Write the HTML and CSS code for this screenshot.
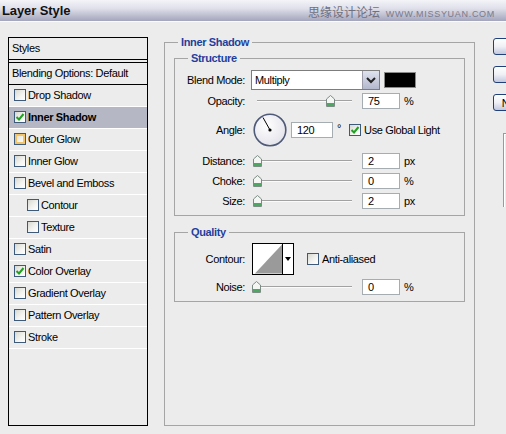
FILE: index.html
```html
<!DOCTYPE html>
<html lang="en">
<head>
    <meta charset="UTF-8">
    <title>Layer Style</title>
    <link rel="stylesheet" href="styles.css">
</head>
<body>
    <div class="titlebar">
        <span class="title">Layer Style</span>
        <span class="watermark">思缘设计论坛 <small>www.missyuan.com</small></span>
    </div>

    <div class="dialog">
        <div class="styles-list">
            <div class="styles-head">Styles</div>
            <div class="blend-opts">Blending Options: Default</div>
            <ul class="effects">
                <li><span class="cb"></span>Drop Shadow</li>
                <li class="selected"><span class="cb"><svg viewBox="0 0 10 10"><polyline points="1.5,5 4,7.5 8.5,2" /></svg></span>Inner Shadow</li>
                <li><span class="cb hover"></span>Outer Glow</li>
                <li><span class="cb"></span>Inner Glow</li>
                <li><span class="cb"></span>Bevel and Emboss</li>
                <li class="indent"><span class="cb"></span>Contour</li>
                <li class="indent"><span class="cb"></span>Texture</li>
                <li><span class="cb"></span>Satin</li>
                <li><span class="cb"><svg viewBox="0 0 10 10"><polyline points="1.5,5 4,7.5 8.5,2" /></svg></span>Color Overlay</li>
                <li><span class="cb"></span>Gradient Overlay</li>
                <li><span class="cb"></span>Pattern Overlay</li>
                <li><span class="cb"></span>Stroke</li>
            </ul>
        </div>

        <fieldset class="group main">
            <legend>Inner Shadow</legend>

            <fieldset class="group subgroup structure">
                <legend>Structure</legend>

                <div class="row blend-row">
                    <span class="lbl">Blend Mode:</span>
                    <div class="select">
                        <span class="select-text">Multiply</span>
                        <span class="select-btn"><svg viewBox="0 0 16 18"><polyline points="4,7 8,11 12,7" /></svg></span>
                    </div>
                    <span class="swatch"></span>
                </div>

                <div class="row slider-row opacity-row">
                    <span class="lbl">Opacity:</span>
                    <div class="slider">
                        <div class="track"></div>
                        <svg class="thumb" style="left:75px" viewBox="0 0 9 12"><polygon class="thumb-body" points="4.5,0.5 8.5,4 8.5,11.5 0.5,11.5 0.5,4" /><rect class="thumb-foot" x="1" y="8" width="7" height="3" /></svg>
                    </div>
                    <span class="num">75</span>
                    <span class="unit">%</span>
                </div>

                <div class="row angle-row">
                    <span class="lbl">Angle:</span>
                    <svg class="dial" viewBox="0 0 34 34">
                        <defs>
                            <radialGradient id="dialFill" cx="40%" cy="35%" r="70%">
                                <stop offset="0" stop-color="#ffffff" />
                                <stop offset="1" stop-color="#e2e2ea" />
                            </radialGradient>
                        </defs>
                        <circle cx="17" cy="17" r="15.8" fill="url(#dialFill)" stroke="#4f5a78" stroke-width="1.6" />
                        <line x1="17" y1="17" x2="10" y2="4.5" stroke="#000" stroke-width="1" />
                        <circle cx="17" cy="17" r="1.6" fill="#000" />
                    </svg>
                    <span class="num wide">120</span>
                    <span class="deg">°</span>
                    <span class="cb"><svg viewBox="0 0 10 10"><polyline points="1.5,5 4,7.5 8.5,2" /></svg></span>
                    <span class="cb-label">Use Global Light</span>
                </div>

                <div class="row slider-row gap6">
                    <span class="lbl">Distance:</span>
                    <div class="slider">
                        <div class="track"></div>
                        <svg class="thumb" style="left:2px" viewBox="0 0 9 12"><polygon class="thumb-body" points="4.5,0.5 8.5,4 8.5,11.5 0.5,11.5 0.5,4" /><rect class="thumb-foot" x="1" y="8" width="7" height="3" /></svg>
                    </div>
                    <span class="num">2</span>
                    <span class="unit">px</span>
                </div>

                <div class="row slider-row gap4">
                    <span class="lbl">Choke:</span>
                    <div class="slider">
                        <div class="track"></div>
                        <svg class="thumb" style="left:2px" viewBox="0 0 9 12"><polygon class="thumb-body" points="4.5,0.5 8.5,4 8.5,11.5 0.5,11.5 0.5,4" /><rect class="thumb-foot" x="1" y="8" width="7" height="3" /></svg>
                    </div>
                    <span class="num">0</span>
                    <span class="unit">%</span>
                </div>

                <div class="row slider-row gap4">
                    <span class="lbl">Size:</span>
                    <div class="slider">
                        <div class="track"></div>
                        <svg class="thumb" style="left:2px" viewBox="0 0 9 12"><polygon class="thumb-body" points="4.5,0.5 8.5,4 8.5,11.5 0.5,11.5 0.5,4" /><rect class="thumb-foot" x="1" y="8" width="7" height="3" /></svg>
                    </div>
                    <span class="num">2</span>
                    <span class="unit">px</span>
                </div>
            </fieldset>

            <fieldset class="group subgroup quality">
                <legend>Quality</legend>

                <div class="row contour-row">
                    <span class="lbl">Contour:</span>
                    <div class="contour">
                        <svg class="contour-graph" viewBox="0 0 30 30"><polygon points="2,30 30,0 30,30" fill="#9a9a9a" /></svg>
                        <span class="contour-btn"><svg viewBox="0 0 10 30"><polygon points="2,13 8,13 5,17" fill="#000" /></svg></span>
                    </div>
                    <span class="cb"></span>
                    <span class="cb-label">Anti-aliased</span>
                </div>

                <div class="row slider-row gap4">
                    <span class="lbl">Noise:</span>
                    <div class="slider">
                        <div class="track"></div>
                        <svg class="thumb" style="left:1px" viewBox="0 0 9 12"><polygon class="thumb-body" points="4.5,0.5 8.5,4 8.5,11.5 0.5,11.5 0.5,4" /><rect class="thumb-foot" x="1" y="8" width="7" height="3" /></svg>
                    </div>
                    <span class="num">0</span>
                    <span class="unit">%</span>
                </div>
            </fieldset>
        </fieldset>

        <div class="buttons">
            <button class="btn">OK</button>
            <button class="btn">Cancel</button>
            <button class="btn">New Style...</button>
            <div class="preview"></div>
        </div>
    </div>
</body>
</html>
```

FILE: styles.css
```css
html, body { overflow: hidden; }
body { margin: 0; width: 506px; height: 434px; background: #ececec; font-family: "Liberation Sans", Arial, sans-serif; font-size: 11px; letter-spacing: -0.35px; color: #000; }

/* title bar */
.titlebar { position: relative; height: 21px; border-bottom: 1px solid #fbfbfd; background: linear-gradient(#f4f4f8, #dfe0ea 40%, #a3a5bc); display: flex; align-items: center; padding-left: 2px; }
.title { font-size: 13px; font-weight: bold; letter-spacing: -0.1px; color: #111; }
.watermark { position: absolute; right: 11px; top: 3px; font-family: "Noto Sans CJK SC", sans-serif; font-size: 12px; color: #70707e; letter-spacing: 0; }
.watermark small { font-family: "Liberation Sans", Arial, sans-serif; font-size: 9px; text-transform: uppercase; letter-spacing: 0.7px; margin-left: 3px; color: #7a7a8c; }

.dialog { display: flex; align-items: flex-start; }

/* styles list */
.styles-list { box-sizing: border-box; width: 140px; height: 389px; margin: 15px 0 0 8px; border: 1px solid #000; flex: none; }
.styles-head { height: 21px; line-height: 20px; padding-left: 3px; border-bottom: 1px solid #000; margin-bottom: 2px; }
.blend-opts { height: 21px; line-height: 20px; padding-left: 3px; border-top: 1px solid #000; border-bottom: 1px solid #000; }
.effects { list-style: none; margin: 0; padding: 0; }
.effects li { box-sizing: border-box; height: 22px; padding: 0 0 1px 5px; border-bottom: 1px solid #fff; display: flex; align-items: center; }
.effects li.indent { padding-left: 18px; }
.effects li.selected { background: #b5b7c4; font-weight: bold; }
.effects .cb { margin-right: 2px; }

/* checkbox */
.cb { box-sizing: border-box; width: 12px; height: 12px; border: 1px solid #3e5a7a; background: linear-gradient(135deg, #d8d8d2, #f4f4f2 60%, #fff); display: inline-flex; flex: none; }
.cb.hover { box-shadow: inset 0 0 0 2px #f3c46a; }
.cb svg { width: 10px; height: 10px; }
.cb polyline { fill: none; stroke: #21a121; stroke-width: 2; }

/* group boxes */
.group { margin: 0; min-width: 0; box-sizing: border-box; border: 1px solid #a5a5a5; flex: none; }
.group legend { padding: 0 3px; line-height: 14px; font-weight: bold; color: #1f3f9e; }
.main { width: 311px; height: 391px; margin: 13px 0 0 16px; padding: 0 9px; }
.main > legend { margin-left: 4px; }
.subgroup { width: 291px; padding: 0; }
.subgroup > legend { margin-left: 13px; }
.structure { margin-top: 2px; padding: 5px 0 6px; }
.quality { margin-top: 9px; padding: 4px 0 6px; }

/* rows */
.row { display: flex; align-items: center; }
.lbl { width: 70px; text-align: right; margin-right: 6px; flex: none; }
.blend-row { height: 20px; }
.opacity-row { margin-top: 3px; }
.angle-row { margin-top: 4px; height: 34px; }
.gap6 { margin-top: 6px; }
.gap4 { margin-top: 4px; }
.slider-row { height: 16px; }

.select { box-sizing: border-box; width: 129px; height: 20px; border: 1px solid #7d7d7d; background: #fff; display: flex; }
.select-text { flex: 1; padding-left: 3px; line-height: 18px; }
.select-btn { width: 16px; background: linear-gradient(#dfe2ee, #b3b8cc); border-left: 1px solid #9a9aa8; }
.select-btn svg { width: 16px; height: 18px; }
.select-btn polyline { fill: none; stroke: #222; stroke-width: 2; }
.swatch { box-sizing: border-box; width: 32px; height: 16px; margin-left: 4px; background: #000; border: 1px solid #8a8a8a; }

.slider { position: relative; width: 101px; height: 16px; margin-right: 10px; flex: none; }
.track { position: absolute; left: 6px; right: 0; top: 7px; height: 0; border-top: 1px solid #a2a2a2; border-bottom: 1px solid #fbfbfb; }
.thumb { position: absolute; top: 2px; width: 9px; height: 12px; }
.thumb-body { fill: #f4f6f4; stroke: #7c8c84; stroke-width: 1; }
.thumb-foot { fill: #4aa860; }

.num { box-sizing: border-box; width: 38px; height: 16px; border: 1px solid #a5acb2; background: #fff; padding-left: 5px; line-height: 14px; margin-right: 4px; flex: none; }
.num.wide { width: 42px; margin-right: 0; }
.unit { line-height: 14px; }

.dial { width: 34px; height: 34px; margin: 0 4px 0 2px; flex: none; }
.deg { align-self: flex-start; margin: 9px 8px 0 4px; }
.cb-label { margin-left: 3px; }

.contour-row { height: 32px; }
.contour { box-sizing: border-box; width: 42px; height: 32px; margin-left: 1px; border: 1px solid #000; background: #fff; display: flex; margin-right: 13px; flex: none; }
.contour-graph { width: 30px; height: 30px; }
.contour-btn { width: 10px; border-left: 1px solid #000; }
.contour-btn svg { width: 10px; height: 30px; }

/* buttons */
.buttons { margin: 16px 0 0 18px; display: flex; flex-direction: column; flex: none; }
.btn { box-sizing: border-box; width: 76px; height: 17px; margin: 0 0 11px; padding: 0; border: 1px solid #20407a; border-radius: 3px; background: linear-gradient(#ffffff, #eef0f6 50%, #c4c8dc); font-family: "Liberation Sans", Arial, sans-serif; font-size: 11px; color: #000; }
.preview { width: 60px; height: 73px; margin: 11px 0 0 10px; border-left: 1px solid #9a9a9a; border-top: 1px solid #9a9a9a; box-shadow: inset 1px 1px 0 #fff; }
```
